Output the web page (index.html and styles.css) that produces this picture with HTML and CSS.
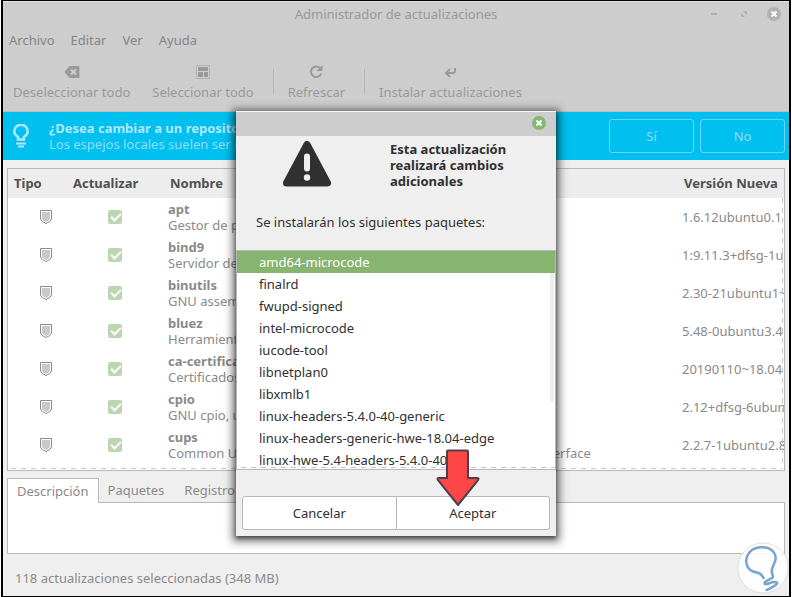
FILE: index.html
```
<!DOCTYPE html>
<html lang="es">
<head>
<meta charset="utf-8">
<title>Administrador de actualizaciones</title>
<link rel="stylesheet" href="styles.css">
</head>
<body>
<svg class="defs" aria-hidden="true">
  <symbol id="shield" viewBox="0 0 12 14"><path d="M.5.5h11v8.500q-.6 2.800-5.500 4.500Q1.100 11.800.5 9z" fill="#fff" stroke="#8b8b8b"/><path d="M2 2h8v6.700Q9.500 10.600 6 12 2.500 10.600 2 8.700z" fill="#c9c9c9"/></symbol>
</svg>
<main class="window">
  <header class="titlebar">
    <h1>Administrador de actualizaciones</h1>
    <div class="controls">
      <button aria-label="Minimizar"><svg width="14" height="14" viewBox="0 0 14 14"><path d="M4 7h6" stroke="#b0b0b2" stroke-width="2"/></svg></button>
      <button aria-label="Restaurar"><svg width="14" height="14" viewBox="0 0 14 14"><path d="M6 4h4v4zM4 6v4h4z" fill="#b2b2b2"/></svg></button>
      <button aria-label="Cerrar"><svg width="14" height="14" viewBox="0 0 14 14"><circle cx="7" cy="7" r="7" fill="#b1b1b4"/><path d="M4.500 4.500l5 5m0-5l-5 5" stroke="#fff" stroke-width="2"/></svg></button>
    </div>
  </header>
  <nav class="menubar"><button>Archivo</button><button>Editar</button><button>Ver</button><button>Ayuda</button></nav>
  <div class="toolbar">
    <button><svg width="16" height="16" viewBox="0 0 16 16"><path d="M5.500 2H14q1.500 0 1.500 1.500v9Q15.500 14 14 14H5.500L.5 8z" fill="#999"/><path d="M7 5.500l5 5m0-5l-5 5" stroke="#cdcdcd" stroke-width="2"/></svg>Deseleccionar todo</button>
    <button><svg width="16" height="16" viewBox="0 0 16 16"><path d="M1.500 1.500h13v13h-13z" fill="none" stroke="#999" stroke-dasharray="1 1"/><path d="M3 3h10v4H3zM3 8h5v5H3zM9 8h4v5H9z" fill="#999"/></svg>Seleccionar todo</button>
    <span class="divider"></span>
    <button><svg width="16" height="16" viewBox="0 0 16 16"><path d="M12.200 4.200A5.300 5.300 0 1 0 13.200 9.500" fill="none" stroke="#999" stroke-width="2"/><path d="M14.500 1v6h-6z" fill="#999"/></svg>Refrescar</button>
    <span class="divider"></span>
    <button><svg width="16" height="16" viewBox="0 0 16 16"><path d="M13 4v2.500Q13 9 10.500 9H4" fill="none" stroke="#999" stroke-width="2"/><path d="M8 5L4 9l4 4" fill="none" stroke="#999" stroke-width="2"/></svg>Instalar actualizaciones</button>
  </div>
  <section class="infobar">
    <svg width="16" height="24" viewBox="0 0 16 24"><path d="M5 15.500v-2.700C2.700 11.400 1.300 9.700 1.300 7.400a6.700 6.700 0 0 1 13.400 0c0 2.300-1.400 4-3.700 5.400v2.700z" fill="none" stroke="#b3e6ff" stroke-width="2.500"/><path d="M3 19.500h10M5 22.500h6" stroke="#b3e6ff" stroke-width="2"/></svg>
    <p><strong>¿Desea cambiar a un repositorio local?</strong><br>Los espejos locales suelen ser más rápidos</p>
    <button>Sí</button><button>No</button>
  </section>
  <div class="updates">
    <table>
      <colgroup><col class="c-type"><col class="c-check"><col class="c-name"><col class="c-version"></colgroup>
      <thead><tr><th>Tipo</th><th>Actualizar</th><th>Nombre</th><th>Versión Nueva</th></tr></thead>
      <tbody>
        <tr><td><svg class="shield"><use href="#shield"/></svg></td><td><input type="checkbox" checked aria-label="apt"></td><td><b>apt</b><br>Gestor de paquetes</td><td>1.6.12ubuntu0.1</td></tr>
        <tr><td><svg class="shield"><use href="#shield"/></svg></td><td><input type="checkbox" checked aria-label="bind9"></td><td><b>bind9</b><br>Servidor de nombres</td><td>1:9.11.3+dfsg-1ubuntu1</td></tr>
        <tr><td><svg class="shield"><use href="#shield"/></svg></td><td><input type="checkbox" checked aria-label="binutils"></td><td><b>binutils</b><br>GNU assembler, linker</td><td>2.30-21ubuntu1~18</td></tr>
        <tr><td><svg class="shield"><use href="#shield"/></svg></td><td><input type="checkbox" checked aria-label="bluez"></td><td><b>bluez</b><br>Herramientas Bluetooth</td><td>5.48-0ubuntu3.4</td></tr>
        <tr><td><svg class="shield"><use href="#shield"/></svg></td><td><input type="checkbox" checked aria-label="ca-certificates"></td><td><b>ca-certificates</b><br>Certificados comunes</td><td>20190110~18.04</td></tr>
        <tr><td><svg class="shield"><use href="#shield"/></svg></td><td><input type="checkbox" checked aria-label="cpio"></td><td><b>cpio</b><br>GNU cpio, utilidad</td><td>2.12+dfsg-6ubuntu0</td></tr>
        <tr><td><svg class="shield"><use href="#shield"/></svg></td><td><input type="checkbox" checked aria-label="cups"></td><td><b>cups</b><br>Common UNIX Printing System(tm) PPD/driver support web interface</td><td>2.2.7-1ubuntu2.8</td></tr>
      </tbody>
    </table>
  </div>
  <div class="tabs"><button class="active">Descripción</button><button>Paquetes</button><button>Registro</button></div>
  <div class="panel"></div>
  <footer>118 actualizaciones seleccionadas (348 MB)</footer>
</main>
<div class="overlay">
  <section class="dialog" role="dialog" aria-labelledby="dlg-title">
    <div class="dialog-bar"><button aria-label="Cerrar"><svg width="14" height="14" viewBox="0 0 14 14"><circle cx="7" cy="7" r="7" fill="#87b671"/><path d="M4.500 4.500l5 5m0-5l-5 5" stroke="#fff" stroke-width="2"/></svg></button></div>
    <div class="message">
      <svg width="48" height="46" viewBox="0 0 48 46"><path d="M24 3.500L44.500 42h-41z" fill="#303030" stroke="#303030" stroke-width="7" stroke-linejoin="round"/><path d="M24 15.500v12" stroke="#f0f0f0" stroke-width="6" stroke-linecap="round"/><circle cx="24" cy="36.500" r="3.200" fill="#f0f0f0"/></svg>
      <h2 id="dlg-title">Esta actualización realizará cambios adicionales</h2>
    </div>
    <p>Se instalarán los siguientes paquetes:</p>
    <ul class="packages">
      <li class="selected">amd64-microcode</li><li>finalrd</li><li>fwupd-signed</li><li>intel-microcode</li><li>iucode-tool</li><li>libnetplan0</li><li>libxmlb1</li><li>linux-headers-5.4.0-40-generic</li><li>linux-headers-generic-hwe-18.04-edge</li><li>linux-hwe-5.4-headers-5.4.0-40</li>
    </ul>
    <div class="actions"><button>Cancelar</button><button>Aceptar</button></div>
    <svg class="arrow" width="44" height="58" viewBox="0 0 44 58"><path d="M12 1.500h19q1 0 1 1V29h9.500q1.500.5.700 1.800L22 56 1.800 30.800Q1 29.500 2.500 29H11V2.500q0-1 1-1z" fill="#ff4646" stroke="#4a3f4a" stroke-width="2" stroke-linejoin="round"/></svg>
  </section>
</div>
<svg class="watermark" width="52" height="52" viewBox="0 0 52 52"><circle cx="26" cy="26" r="25" fill="#fff" fill-opacity=".9" stroke="#dcdfe4"/><path d="M26.500 36C24 30 20 31 16 29.500 9 27 7 17 12 11 17 4 31 3 36.500 10c5 6 0 12-1.500 17-1 4 1 5 1 8-2 3-8 3-8.500 6 0 3 6-1 10-1 5 0 2 3-1 4.500-2 1.500-5 2.500-7 3.500" fill="none" stroke="#78a4d0" stroke-width="2.500" stroke-linecap="round"/></svg>
</body>
</html>
```
FILE: styles.css
```
* { box-sizing: border-box; }
body, h1, h2, p, ul { margin: 0; padding: 0; font: 13px/16px "Noto Sans", sans-serif; }
body { position: relative; min-height: 100vh; padding: 0 1px; background: #fff; color: #8a8a8a; overflow: hidden; }
button { border: 0; padding: 0; background: none; color: inherit; font: inherit; }
svg { display: block; flex: none; }
.defs { position: absolute; width: 0; height: 0; }

.window { display: flex; flex-direction: column; min-height: 100vh; border: solid #000; border-width: 1px 2px; background: #efefef; }
.titlebar { display: grid; grid-template-columns: 1fr auto 1fr; align-items: center; height: 27px; padding-bottom: 2px; background: #cdcdcd; border-top: 1px solid #e4e4e4; }
.titlebar h1 { grid-column: 2; color: #999; }
.controls { display: flex; justify-content: flex-end; gap: 16px; padding-right: 8px; }
.menubar { display: flex; gap: 16px; padding: 4px 6px; background: #cdcdcd; color: #858585; }
.toolbar { display: flex; align-items: center; height: 60px; padding: 10px; background: #cdcdcd; color: #999; border-bottom: 1px solid #c0c0c0; }
.toolbar button { display: flex; flex-direction: column; align-items: center; gap: 4px; }
.toolbar button + button { margin-left: 22px; }
.divider { width: 1px; height: 25px; margin: 0 20px 0 19px; background: #b5b5b5; }
.divider + button { margin-left: -6px; }

.infobar { display: flex; align-items: center; gap: 6px; height: 48px; padding: 0 4px 0 10px; background: #00c0ef; color: #91ddff; }
.infobar p { flex: 1; margin-left: 14px; white-space: nowrap; }
.infobar strong { color: #b3e6ff; }
.infobar button { width: 85px; height: 34px; border: 1px solid #70d2fb; border-radius: 3px; }

.updates { position: relative; height: 303px; margin: 8px 4px 7px; border: 1px solid #b8b8b8; background: #fff; overflow: hidden; }
.updates::after { content: ""; position: absolute; inset: 29px 1px 1px 3px; background: repeating-linear-gradient(90deg, #c6c6c6 0 5px, #0000 5px 10px) bottom / 100% 1px no-repeat, repeating-linear-gradient(#c6c6c6 0 5px, #0000 5px 10px) right / 1px 100% no-repeat; pointer-events: none; }
table { width: 100%; table-layout: fixed; border-collapse: collapse; white-space: nowrap; }
.c-type { width: 58px; }
.c-check { width: 97px; }
.c-version { width: 107px; }
th { height: 29px; padding: 0 7px 2px; background: #ededed; color: #505050; text-align: left; }
td { height: 38px; padding: 0 5px; vertical-align: middle; }
th:first-child { padding-left: 6px; }
td:first-child { padding-left: 32px; }
.shield { width: 12px; height: 14px; }
td:nth-child(2) { padding-left: 42px; }
input[type=checkbox] { appearance: none; display: block; width: 14px; height: 14px; margin: 0; border-radius: 2px; background: #bbd6b1; }
input[type=checkbox]:checked::after { content: ""; display: block; width: 8px; height: 4px; margin: 3px; border: solid #fff; border-width: 0 0 2px 2px; transform: rotate(-45deg); }

.tabs { display: flex; height: 24px; margin: 0 4px; position: relative; z-index: 1; }
.tabs button { padding: 0 9px; margin-right: 2px; }
.tabs .active { height: 25px; margin: 0; border: 1px solid #b8b8b8; border-bottom: 0; background: #fff; }
.panel { height: 52px; margin: 0 4px; border: 1px solid #b8b8b8; background: #fff; }
footer { margin-top: 16px; padding-left: 12px; }

.overlay { position: absolute; inset: 0; display: flex; justify-content: center; align-items: flex-start; padding-top: 111px; z-index: 2; }
.dialog { position: relative; width: 320px; background: #efefef; color: #303030; box-shadow: 0 2px 4px #0008, 0 2px 8px 4px #0007; }
.dialog-bar { display: flex; justify-content: flex-end; align-items: center; height: 25px; padding: 0 10px 2px 0; background: #cdcdcd; border-top: 1px solid #f4f4f4; }
.message { display: flex; gap: 59px; padding: 5px 16px 0 47px; }
.message h2 { font-weight: bold; width: 124px; }
.dialog p { padding: 25px 20px 20px; }
.packages { position: relative; height: 220px; border: 1px solid #b8b8b8; background: #fff; list-style: none; overflow: hidden; }
.packages li { padding: 3px 22px; height: 22px; }
.packages .selected { background: #87b46f; color: #fff; }
.packages::before { content: ""; position: absolute; top: 22px; right: 1px; width: 4px; height: 129px; background: #eee; border-radius: 0 0 2px 2px; }
.packages::after { content: ""; position: absolute; inset: auto 0 1px 4px; height: 1px; background: repeating-linear-gradient(90deg, #c6c6c6 0 5px, #0000 5px 10px); }
.actions { display: flex; padding: 26px 6px 6px; }
.actions button { flex: 1; height: 34px; border: 1px solid #b8b8b8; border-radius: 3px 0 0 3px; background: #fff; }
.actions button + button { border-left: 0; border-radius: 0 3px 3px 0; }
.arrow { position: absolute; left: 200px; top: 338px; }
.watermark { position: absolute; right: 3px; bottom: 3px; z-index: 3; }
```
